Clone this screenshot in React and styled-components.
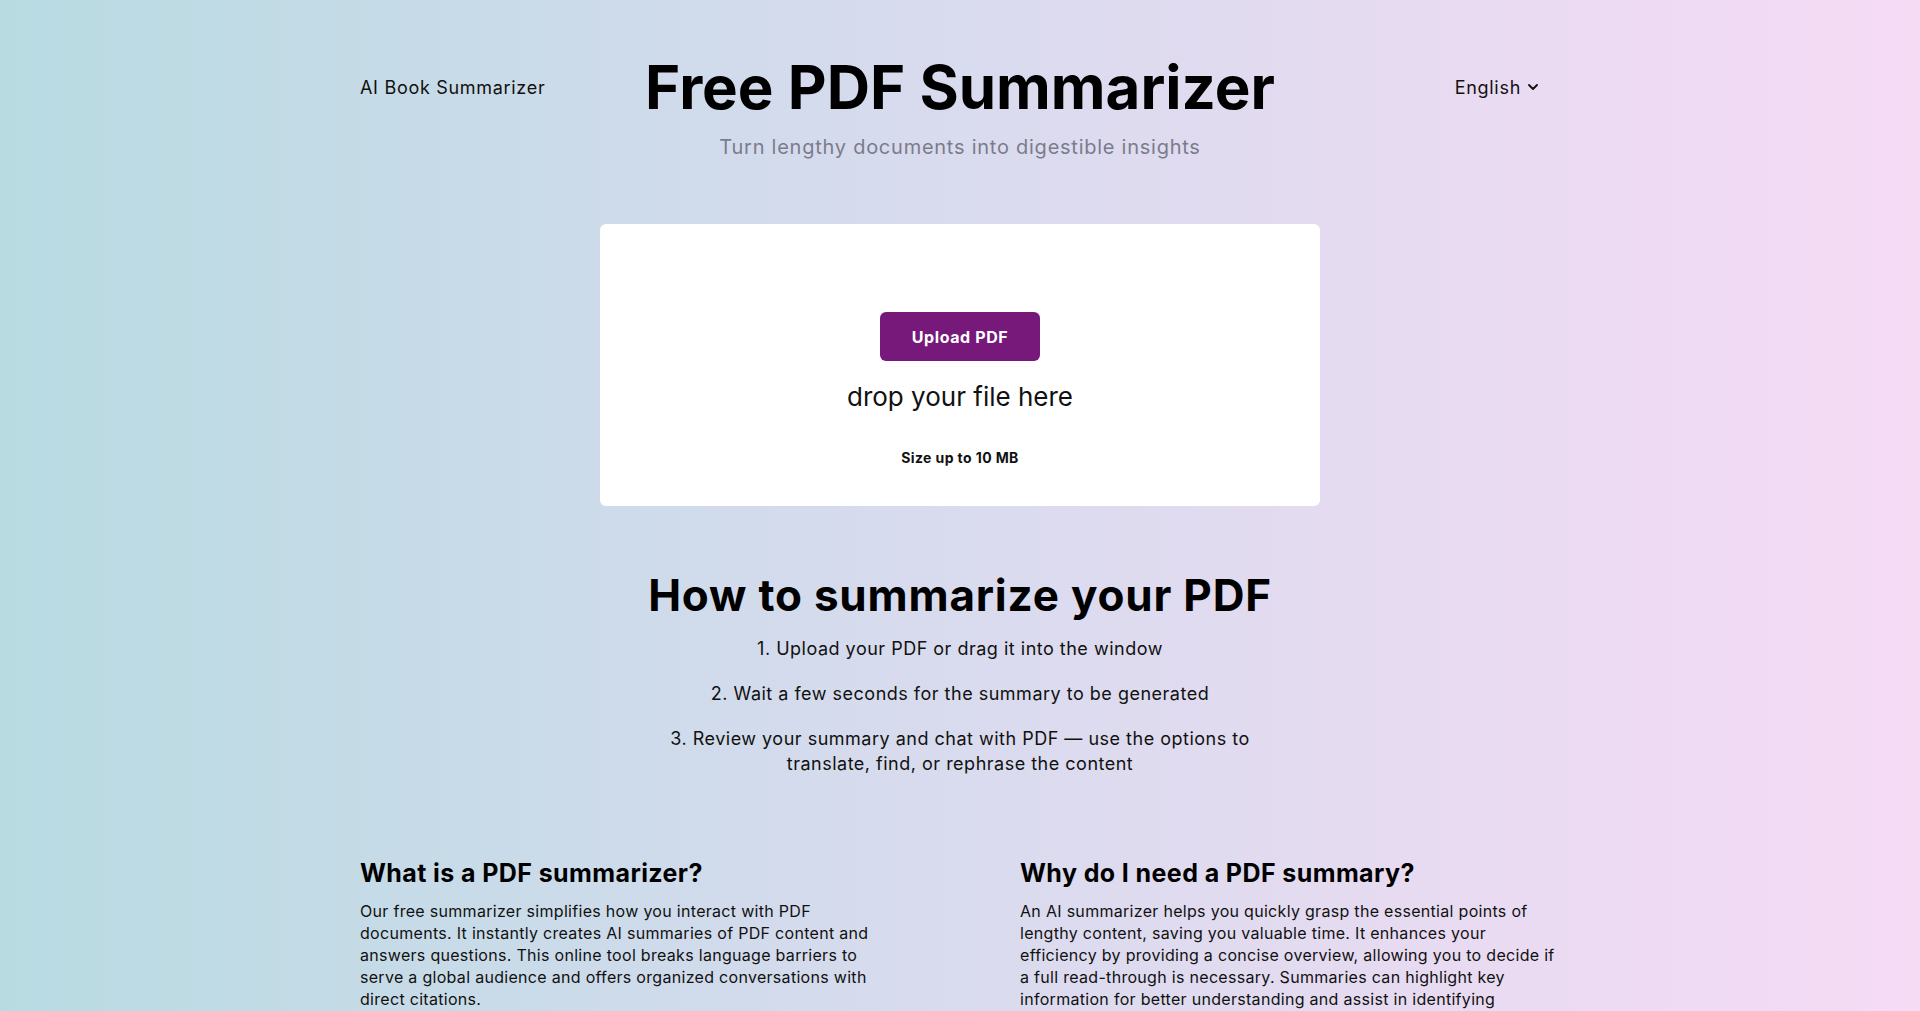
import React from 'react';
import styled, { createGlobalStyle } from 'styled-components';
import { ChevronDown } from 'lucide-react';

const GlobalStyle = createGlobalStyle`
  html, body {
    margin: 0;
    padding: 0;
  }
  body {
    font-family: Inter, "Noto Sans", "DejaVu Sans", sans-serif;
    color: #111;
    background: linear-gradient(90deg, #b8dbe2 0%, #d9dbee 50%, #f6dbf5 100%);
    min-height: 100vh;
  }
`;

const Page = styled.div`
  width: 1200px;
  margin: 0 auto;
  padding-top: 51px;
  padding-bottom: 60px;
`;

const Header = styled.header`
  display: flex;
  align-items: center;
  justify-content: space-between;
`;

const NavLink = styled.a`
  font-size: 18px;
  letter-spacing: 0.7px;
  color: #111;
  text-decoration: none;
  width: 220px;
`;

const Title = styled.h1`
  margin: 0;
  font-size: 60px;
  line-height: 72px;
  font-weight: 700;
  color: #000;
`;

const LangSelect = styled.button`
  width: 220px;
  display: flex;
  align-items: center;
  justify-content: flex-end;
  gap: 4px;
  padding: 0 19px 0 0;
  background: none;
  border: none;
  font-family: inherit;
  font-size: 18px;
  letter-spacing: 0.7px;
  color: #111;
  cursor: pointer;
`;

const Subtitle = styled.p`
  margin: 10px 0 0;
  text-align: center;
  font-size: 20px;
  line-height: 28px;
  letter-spacing: 0.75px;
  color: #7b7b8c;
`;

const UploadCard = styled.div`
  width: 720px;
  height: 282px;
  margin: 63px auto 0;
  background: #fff;
  border-radius: 6px;
  box-sizing: border-box;
  padding-top: 88px;
  display: flex;
  flex-direction: column;
  align-items: center;
`;

const UploadButton = styled.button`
  width: 160px;
  height: 49px;
  border: none;
  border-radius: 6px;
  background: #77197b;
  color: #fff;
  font-family: inherit;
  font-size: 16px;
  letter-spacing: 0.6px;
  font-weight: 700;
  cursor: pointer;
`;

const DropText = styled.div`
  margin-top: 19px;
  font-size: 26px;
  line-height: 34px;
  color: #111;
`;

const SizeNote = styled.div`
  margin-top: 35px;
  font-size: 14px;
  line-height: 18px;
  letter-spacing: 0.4px;
  font-weight: 700;
  color: #111;
`;

const HowTo = styled.section`
  margin-top: 63px;
  display: flex;
  flex-direction: column;
  align-items: center;
  text-align: center;
`;

const SectionTitle = styled.h2`
  margin: 0 0 14px;
  font-size: 44px;
  line-height: 53px;
  font-weight: 700;
  letter-spacing: 0.8px;
  color: #000;
`;

const Step = styled.p`
  margin: 0 0 20px;
  max-width: 600px;
  font-size: 18px;
  line-height: 25px;
  letter-spacing: 0.5px;
  color: #111;
`;

const InfoGrid = styled.div`
  margin-top: 62px;
  display: grid;
  grid-template-columns: 540px 540px;
  justify-content: space-between;
`;

const InfoBlock = styled.article``;

const InfoTitle = styled.h3`
  margin: 0 0 12px;
  font-size: 25px;
  line-height: 30px;
  font-weight: 700;
  letter-spacing: 0.4px;
  color: #000;
`;

const InfoText = styled.p`
  margin: 0;
  font-size: 16px;
  line-height: 22px;
  letter-spacing: 0.3px;
  color: #111;
`;

const steps = [
  '1. Upload your PDF or drag it into the window',
  '2. Wait a few seconds for the summary to be generated',
  '3. Review your summary and chat with PDF — use the options to translate, find, or rephrase the content',
];

const info = [
  {
    title: 'What is a PDF summarizer?',
    text: 'Our free summarizer simplifies how you interact with PDF documents. It instantly creates AI summaries of PDF content and answers questions. This online tool breaks language barriers to serve a global audience and offers organized conversations with direct citations.',
  },
  {
    title: 'Why do I need a PDF summary?',
    text: 'An AI summarizer helps you quickly grasp the essential points of lengthy content, saving you valuable time. It enhances your efficiency by providing a concise overview, allowing you to decide if a full read-through is necessary. Summaries can highlight key information for better understanding and assist in identifying relevant sections for further study.',
  },
];

const App = () => {
  return (
    <>
      <GlobalStyle />
      <Page>
        <Header>
          <NavLink href="#">AI Book Summarizer</NavLink>
          <Title>Free PDF Summarizer</Title>
          <LangSelect>
            English
            <ChevronDown size={16} strokeWidth={2.8} />
          </LangSelect>
        </Header>
        <Subtitle>Turn lengthy documents into digestible insights</Subtitle>

        <UploadCard>
          <UploadButton>Upload PDF</UploadButton>
          <DropText>drop your file here</DropText>
          <SizeNote>Size up to 10 MB</SizeNote>
        </UploadCard>

        <HowTo>
          <SectionTitle>How to summarize your PDF</SectionTitle>
          {steps.map((s) => (
            <Step key={s}>{s}</Step>
          ))}
        </HowTo>

        <InfoGrid>
          {info.map((item) => (
            <InfoBlock key={item.title}>
              <InfoTitle>{item.title}</InfoTitle>
              <InfoText>{item.text}</InfoText>
            </InfoBlock>
          ))}
        </InfoGrid>
      </Page>
    </>
  );
};

export default App;
